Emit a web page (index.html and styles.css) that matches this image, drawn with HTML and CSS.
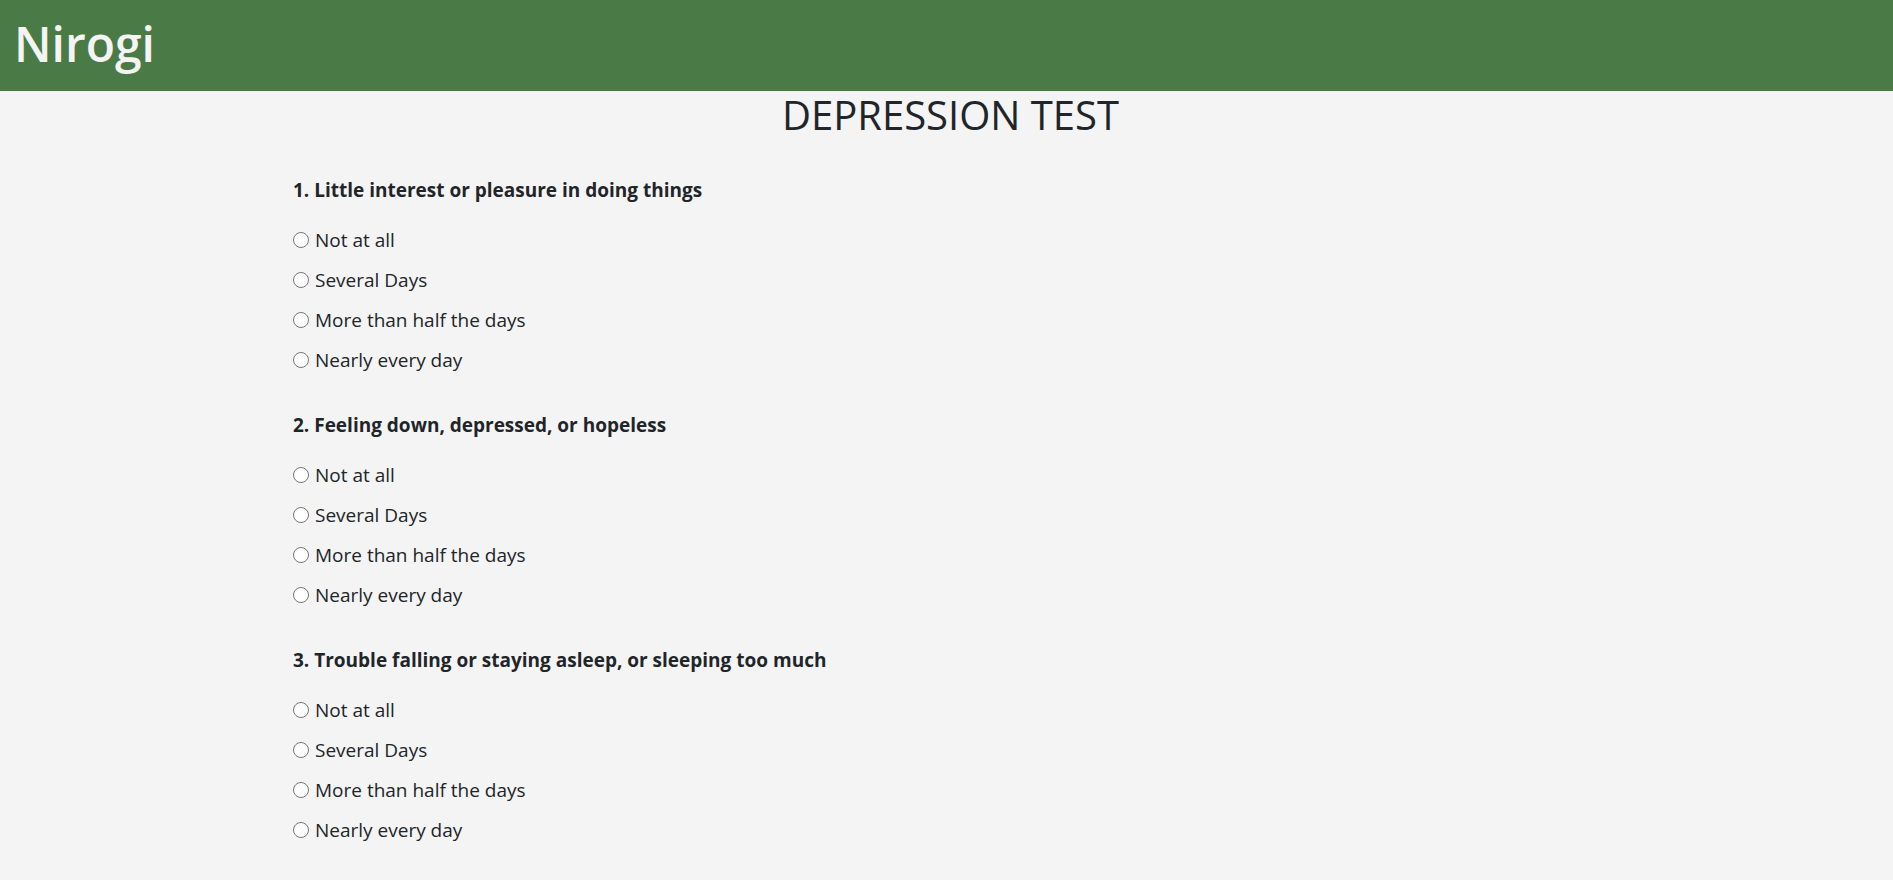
FILE: index.html
```html
<!DOCTYPE html>
<html lang="en">
<head>
<meta charset="utf-8">
<title>Nirogi - Depression Test</title>
<link rel="stylesheet" href="styles.css">
</head>
<body>
<header class="topbar">
  <h1 class="brand">Nirogi</h1>
</header>
<main class="page">
  <h1 class="title">DEPRESSION TEST</h1>
  <form class="quiz">
    <section class="question">
      <p class="q-text">1. Little interest or pleasure in doing things</p>
      <label class="option"><input type="radio" name="q1"><span>Not at all</span></label>
      <label class="option"><input type="radio" name="q1"><span>Several Days</span></label>
      <label class="option"><input type="radio" name="q1"><span>More than half the days</span></label>
      <label class="option"><input type="radio" name="q1"><span>Nearly every day</span></label>
    </section>
    <section class="question">
      <p class="q-text">2. Feeling down, depressed, or hopeless</p>
      <label class="option"><input type="radio" name="q2"><span>Not at all</span></label>
      <label class="option"><input type="radio" name="q2"><span>Several Days</span></label>
      <label class="option"><input type="radio" name="q2"><span>More than half the days</span></label>
      <label class="option"><input type="radio" name="q2"><span>Nearly every day</span></label>
    </section>
    <section class="question">
      <p class="q-text">3. Trouble falling or staying asleep, or sleeping too much</p>
      <label class="option"><input type="radio" name="q3"><span>Not at all</span></label>
      <label class="option"><input type="radio" name="q3"><span>Several Days</span></label>
      <label class="option"><input type="radio" name="q3"><span>More than half the days</span></label>
      <label class="option"><input type="radio" name="q3"><span>Nearly every day</span></label>
    </section>
  </form>
</main>
</body>
</html>
```
FILE: styles.css
```css
* { box-sizing: border-box; }
html, body { margin: 0; padding: 0; }
body {
  background: #f4f4f4;
  color: #212529;
  font-family: "Open Sans", "Noto Sans", "Liberation Sans", sans-serif;
  font-size: 19px;
}
.topbar {
  background: #4a7b47;
  height: 91px;
  display: flex;
  align-items: center;
  padding: 0 14px;
}
.brand {
  margin: 0;
  color: #f4f4f4;
  font-size: 48px;
  font-weight: 600;
  line-height: 1;
  padding-bottom: 4px;
}
.title {
  margin: 0;
  text-align: center;
  font-size: 40px;
  font-weight: 500;
  line-height: 48px;
  padding-left: 8px;
}
.quiz {
  display: flex;
  flex-direction: column;
  gap: 33px;
  padding: 39px 0 0 293px;
}
.question {
  display: flex;
  flex-direction: column;
}
.q-text {
  margin: 0 0 18px;
  font-weight: 700;
  font-size: 19px;
  line-height: 24px;
}
.option {
  display: flex;
  align-items: center;
  gap: 6px;
  height: 40px;
  font-size: 19px;
}
.option input {
  appearance: none;
  -webkit-appearance: none;
  margin: 0;
  width: 16px;
  height: 16px;
  border: 1px solid #767676;
  border-radius: 50%;
  background: #fff;
}
```
